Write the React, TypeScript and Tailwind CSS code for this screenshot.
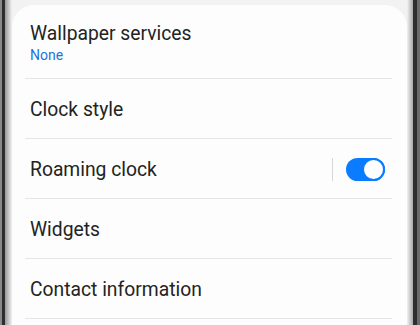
import React from "react";

type Row = { title: string; sub?: string; toggle?: boolean };

const rows: Row[] = [
  { title: "Wallpaper services", sub: "None" },
  { title: "Clock style" },
  { title: "Roaming clock", toggle: true },
  { title: "Widgets" },
  { title: "Contact information" },
];

function Toggle() {
  return (
    <div className="flex items-center gap-[13px]">
      <div className="h-[23px] w-px bg-[#d6d6d6]" />
      <div className="relative h-[23px] w-[39px] rounded-full bg-[#0a7cff]">
        <div className="absolute right-0 top-0 h-[23px] w-[23px] rounded-full border-[2px] border-[#0a7cff] bg-white" />
      </div>
    </div>
  );
}

export default function App() {
  return (
    <div className="flex h-[325px] w-[420px] overflow-hidden bg-[#f2f2f2] font-['Roboto',sans-serif]">
      {/* left bezel */}
      <div className="flex shrink-0">
        <div className="w-[2px] bg-[#8a8a8a]" />
        <div className="w-[3px] bg-[#2e2e2e]" />
        <div className="w-[7px] bg-gradient-to-r from-[#9a9a9a] to-[#f2f2f2]" />
      </div>

      <div className="flex-1 pt-[5px]">
        <div className="h-full rounded-t-[22px] bg-[#fdfdfd] pl-[13px] pr-[15px]">
          {rows.map((row, i) => (
            <div
              key={row.title}
              className={
                "flex items-center justify-between border-b border-[#e6e6e6] pl-[5px] pr-[7px] " +
                (i === 0 ? "h-[74px] pt-[3px]" : "h-[60px] pt-[2px]")
              }
            >
              <div className="flex flex-col">
                <span className="text-[19.3px] leading-[24px] text-[#232323]">{row.title}</span>
                {row.sub ? (
                  <span className="mt-[1px] text-[14px] leading-[17px] text-[#1a75d8]">{row.sub}</span>
                ) : null}
              </div>
              {row.toggle ? <Toggle /> : null}
            </div>
          ))}
        </div>
      </div>

      {/* right bezel */}
      <div className="flex shrink-0">
        <div className="w-[6px] bg-gradient-to-r from-[#f2f2f2] to-[#a8a8a8]" />
        <div className="w-[4px] bg-[#2e2e2e]" />
        <div className="w-[3px] bg-[#6a6a6a]" />
      </div>
    </div>
  );
}
